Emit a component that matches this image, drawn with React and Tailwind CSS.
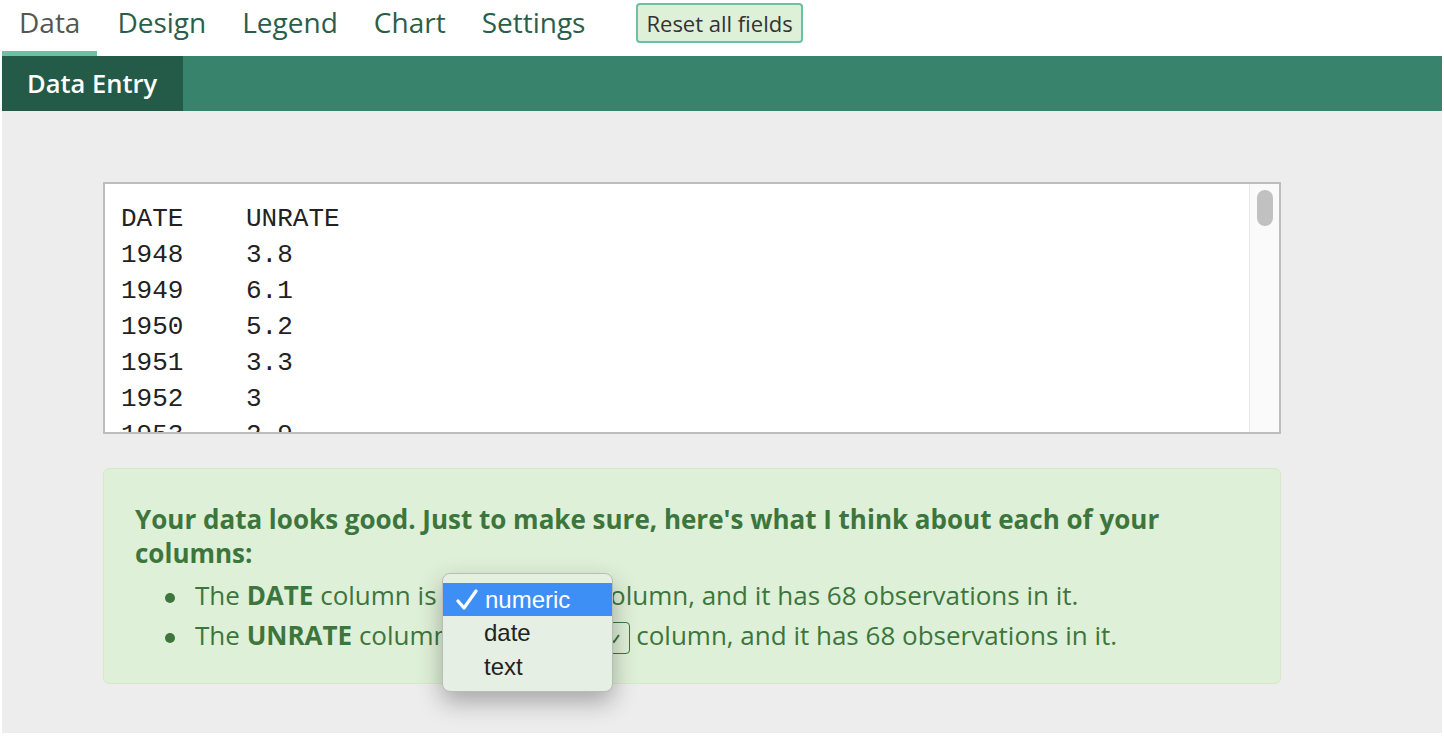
import { useState } from "react";

// Datos de ejemplo que aparecen en el área de texto
const filas = [
  ["DATE", "UNRATE"],
  ["1948", "3.8"],
  ["1949", "6.1"],
  ["1950", "5.2"],
  ["1951", "3.3"],
  ["1952", "3"],
  ["1953", "2.9"],
  ["1954", "5.6"],
];

const pestanas = ["Data", "Design", "Legend", "Chart", "Settings"];

function SelectorTipo() {
  return (
    <span className="mx-[6px] inline-flex h-[32px] w-[149px] items-center justify-between rounded-[4px] border-[1.5px] border-[#3c763d] px-2 align-middle text-[20px] leading-none">
      <span>numeric</span>
      <svg width="12" height="12" viewBox="0 0 12 12" className="text-[#3c763d]">
        <path d="M2 8 L5 10 L10 3" fill="none" stroke="currentColor" strokeWidth="2" />
      </svg>
    </span>
  );
}

// Viñeta redonda de la lista
function Vineta() {
  return <span className="-ml-[30px] mr-[20px] inline-block h-[10px] w-[10px] rounded-full bg-[#3c763d] align-middle" />;
}

export default function App() {
  const [activa] = useState("Data");

  return (
    <div className="min-h-[737px] bg-white px-[2px] pb-[4px] font-['Open_Sans',sans-serif]">
      {/* Pestañas superiores */}
      <div className="flex h-[56px] items-start">
        {pestanas.map((p, i) => (
          <div
            key={p}
            className={
              p === activa
                ? "flex h-[56px] flex-col justify-between px-[17px] text-[#555]"
                : i === 1
                ? "ml-[2px] flex h-[56px] flex-col justify-between px-[18px] text-[#2b5e49]"
                : "flex h-[56px] flex-col justify-between px-[18px] text-[#2b5e49]"
            }
          >
            <span className="mt-[4px] text-[28px] leading-[36px]">{p}</span>
            {p === activa && <span className="-mx-[17px] h-[5px] bg-[#6cc0a3]" />}
          </div>
        ))}
        <button className="ml-[33px] mt-[3px] h-[40px] rounded-[4px] border-2 border-[#6cc0a3] bg-[#dff0d8] px-[8px] text-[22px] leading-none text-[#333]">
          Reset all fields
        </button>
      </div>

      {/* Barra verde con la sub-pestaña */}
      <div className="flex h-[55px] bg-[#38836b]">
        <div className="flex w-[181px] items-center bg-[#245a48] pl-[25px] text-[25.5px] font-semibold text-white">
          Data Entry
        </div>
      </div>

      {/* Zona gris */}
      <div className="h-[622px] bg-[#ededed] pl-[101px] pr-[161px] pt-[71px]">
        <div className="flex h-[252px] border-2 border-[#bdbdbd] bg-white">
          <div className="flex-1 overflow-hidden pl-[16px] pt-[17px] font-['Liberation_Mono',monospace] text-[26px] leading-[36px] text-[#222]">
            {filas.map((f, i) => (
              <div key={i} className="flex">
                <span className="w-[125px]">{f[0]}</span>
                <span>{f[1]}</span>
              </div>
            ))}
          </div>
          <div className="w-[30px] border-l border-[#e6e6e6] bg-[#fafafa] pt-[6px]">
            <div className="mx-auto h-[36px] w-[16px] rounded-full bg-[#c1c1c1]" />
          </div>
        </div>

        {/* Aviso verde */}
        <div className="relative mt-[34px] rounded-[6px] border border-[#d6e9c6] bg-[#dff0d8] px-[31px] pb-[28px] pt-[33px] text-[#3c763d]">
          <p className="text-[26px] font-bold leading-[34px]">
            Your data looks good. Just to make sure, here's what I think about each of your columns:
          </p>
          <ul className="mt-[5px] pl-[60px] text-[26px] leading-[40px]">
            <li>
              <Vineta />
              The <b>DATE</b> column is<SelectorTipo />column, and it has 68 observations in it.
            </li>
            <li>
              <Vineta />
              The <b>UNRATE</b> column is<SelectorTipo />column, and it has 68 observations in it.
            </li>
          </ul>

          {/* Menú desplegado del selector */}
          <div className="absolute left-[338px] top-[104px] h-[119px] w-[171px] rounded-[8px] border border-[#b9bdb6] bg-[#e6efe3] pt-[9px] font-['Liberation_Sans',sans-serif] text-[24px] text-[#222] shadow-[0_10px_24px_rgba(0,0,0,0.3)]">
            <div className="flex h-[33px] items-center bg-[#3d8ff6] pl-[12px] text-white">
              <svg width="24" height="22" viewBox="0 0 24 22" className="mr-[6px]">
                <path d="M3 12 L9 19 L21 2" fill="none" stroke="white" strokeWidth="3.2" strokeLinecap="round" strokeLinejoin="round" />
              </svg>
              numeric
            </div>
            <div className="flex h-[34px] items-center pl-[41px]">date</div>
            <div className="flex h-[34px] items-center pl-[41px]">text</div>
          </div>
        </div>
      </div>
    </div>
  );
}
